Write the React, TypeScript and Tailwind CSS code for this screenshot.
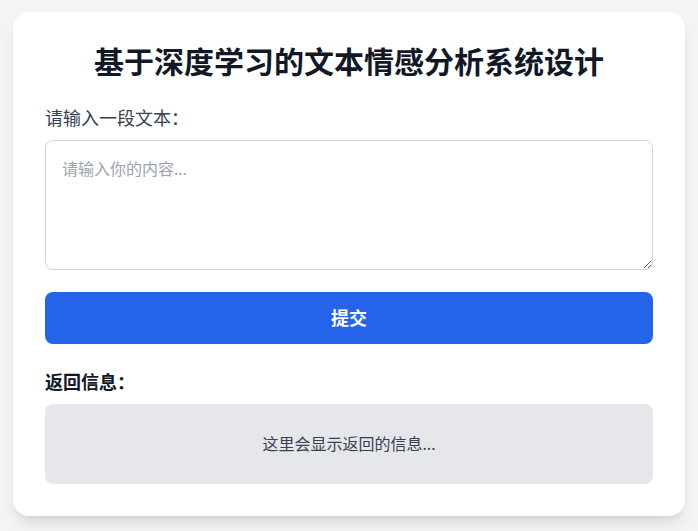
import React from 'react';

export default function App() {
  return (
    <div
      className="min-h-screen bg-[#f3f4f6] pt-3"
      style={{ fontFamily: '"Noto Sans", "Noto Sans CJK SC", sans-serif' }}
    >
      <div className="mx-auto max-w-2xl rounded-2xl bg-white p-8 shadow-lg">
        <h1 className="mb-6 text-center text-3xl font-bold text-[#111827]">基于深度学习的文本情感分析系统设计</h1>

        <label className="mb-2 block text-lg text-[#374151]">请输入一段文本：</label>
        <textarea
          className="block h-[130px] w-full rounded-lg border border-[#d1d5db] p-4 text-base text-[#1f2937] placeholder:text-[#9ca3af]"
          placeholder="请输入你的内容..."
        />

        <button className="mt-[22px] block w-full rounded-lg bg-[#2563eb] py-3 text-lg font-bold text-white">
          提交
        </button>

        {/* Result */}
        <div className="mt-6 mb-2 text-lg font-bold text-[#111827]">返回信息：</div>
        <div className="rounded-lg bg-[#e5e7eb] py-7 text-center text-base text-[#374151]">这里会显示返回的信息...</div>
      </div>
    </div>
  );
}
